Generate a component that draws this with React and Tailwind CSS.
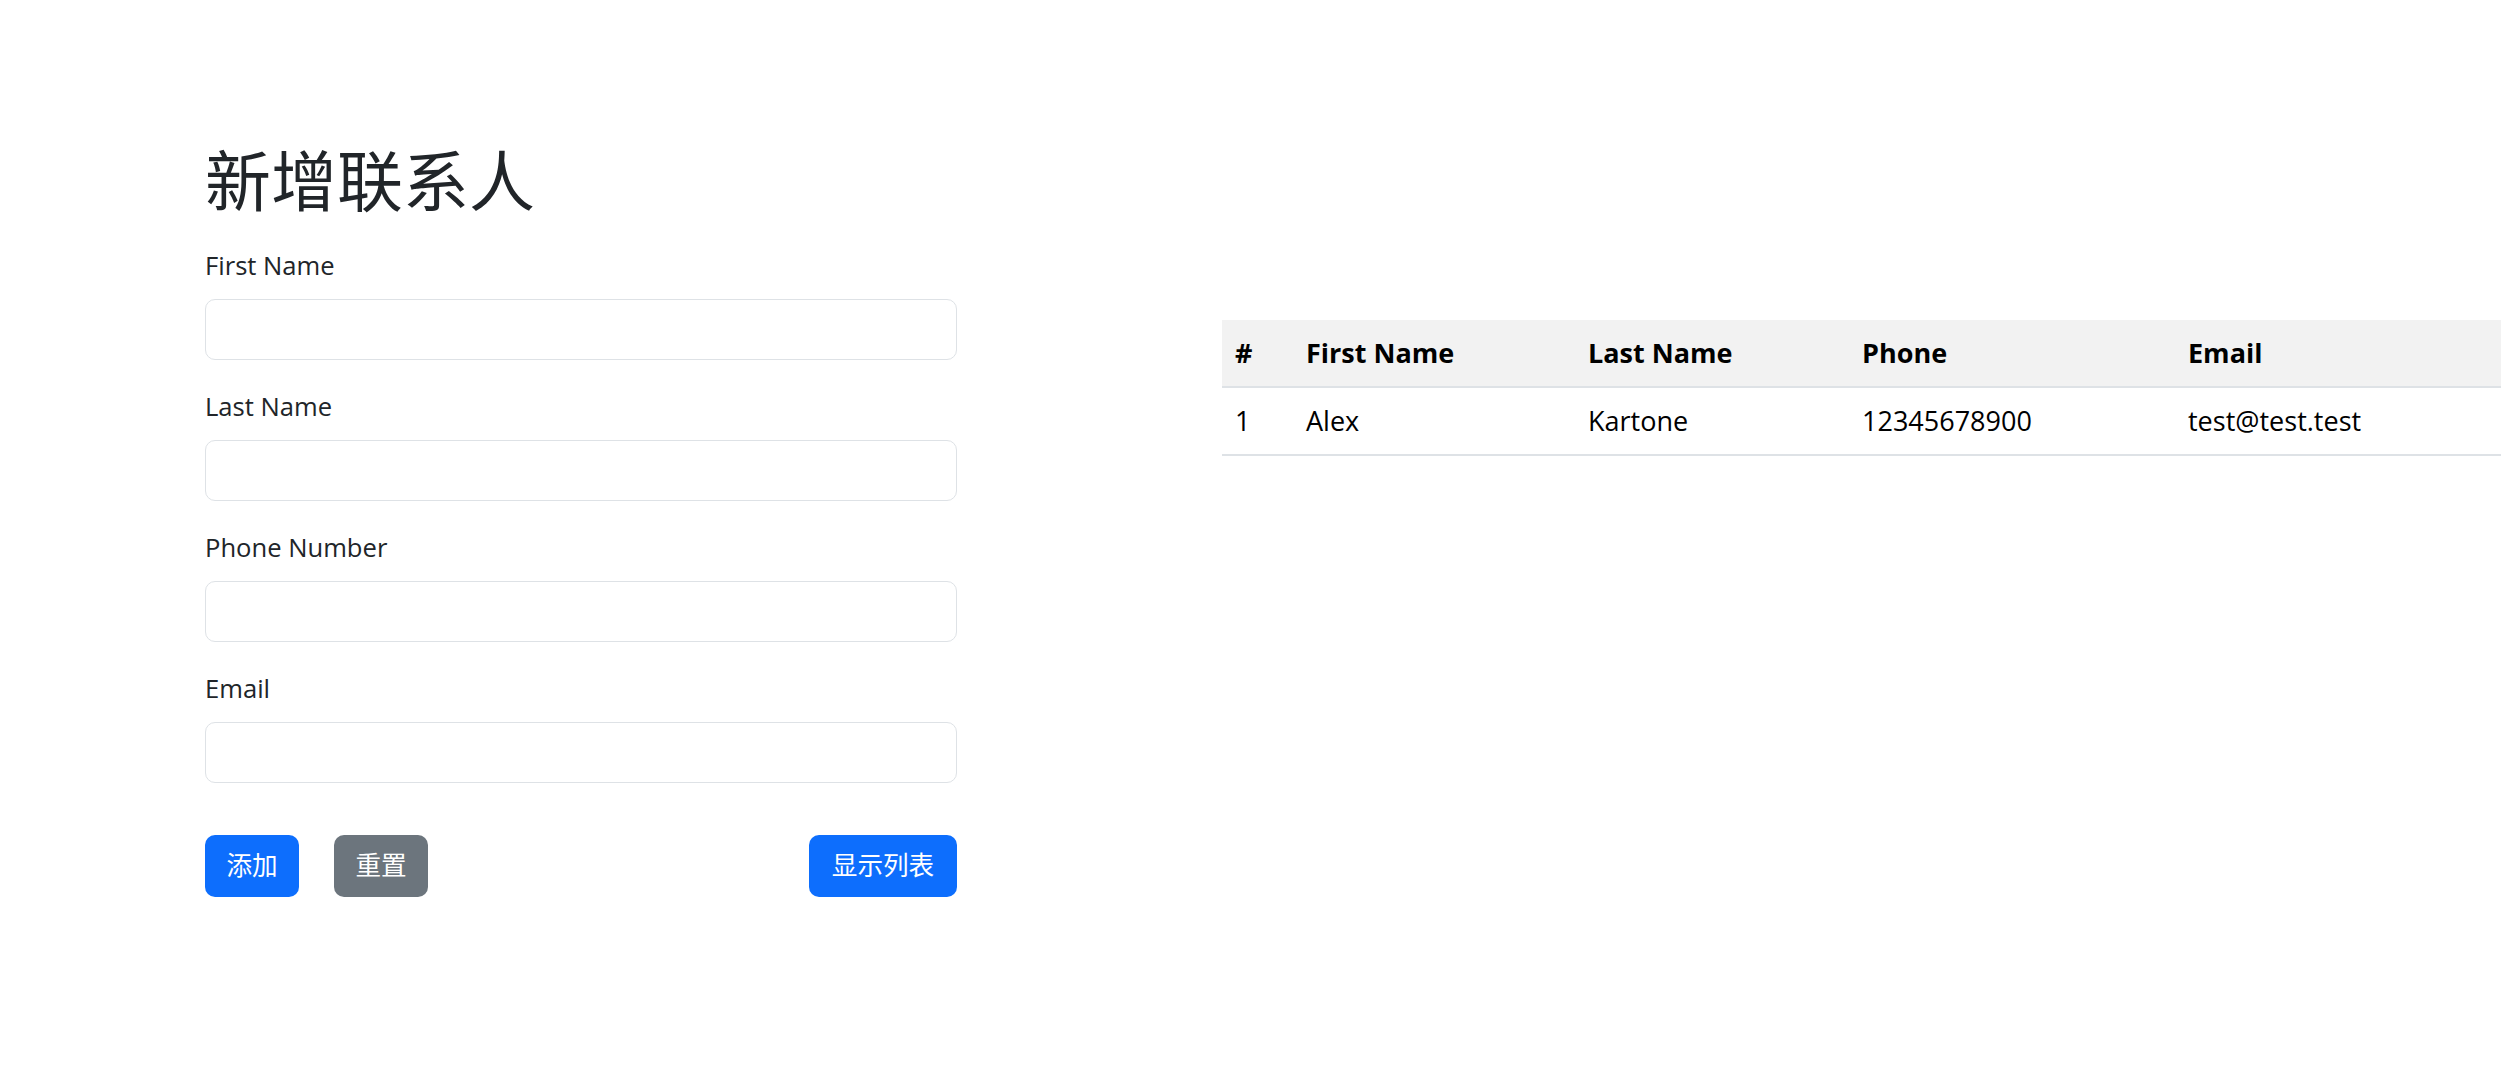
import React, { useState } from 'react';

const contacts = [
  { id: 1, firstName: 'Alex', lastName: 'Kartone', phone: '12345678900', email: 'test@test.test' }
];

const fields = [
  { key: 'firstName', label: 'First Name' },
  { key: 'lastName', label: 'Last Name' },
  { key: 'phone', label: 'Phone Number' },
  { key: 'email', label: 'Email' }
];

const font = { fontFamily: '"Open Sans", "Noto Sans CJK SC", sans-serif' };

const App = () => {
  const [form, setForm] = useState({ firstName: '', lastName: '', phone: '', email: '' });

  const handleChange = (key, value) => setForm({ ...form, [key]: value });
  const handleReset = () => setForm({ firstName: '', lastName: '', phone: '', email: '' });

  return (
    <div className="w-full min-h-screen overflow-hidden bg-white flex items-start text-[#212529]" style={font}>
      {/* Formulario */}
      <div className="ml-[205px] w-[752px] shrink-0 pt-[141px]">
        <h1 className="text-[66px] leading-[78px] font-normal mb-[28px]">新增联系人</h1>
        <div className="flex flex-col gap-[28px]">
          {fields.map(f => (
            <div key={f.key}>
              <label className="block text-[25.6px] leading-[38.4px] mb-[13.6px]">{f.label}</label>
              <input
                value={form[f.key]}
                onChange={e => handleChange(f.key, e.target.value)}
                className="block w-full h-[61px] rounded-[10px] border-[1.6px] border-[#dee2e6] px-[19px] text-[25.6px] outline-none"
              />
            </div>
          ))}
        </div>
        <div className="flex items-center mt-[52px]">
          <button className="h-[62px] w-[94px] rounded-[10px] bg-[#0d6efd] text-white text-[25.6px] leading-[38.4px]">添加</button>
          <button
            onClick={handleReset}
            className="h-[62px] w-[94px] ml-[35px] rounded-[10px] bg-[#6c757d] text-white text-[25.6px] leading-[38.4px]"
          >
            重置
          </button>
          <button className="h-[62px] w-[148px] ml-auto rounded-[10px] bg-[#0d6efd] text-white text-[25.6px] leading-[38.4px]">显示列表</button>
        </div>
      </div>

      {/* Tabla */}
      <div className="ml-[265px] mt-[320px] shrink-0">
        <table className="table-fixed w-[1400px] text-black text-[27px] leading-[40.5px] border-collapse">
          <colgroup>
            <col className="w-[71px]" />
            <col className="w-[282px]" />
            <col className="w-[274px]" />
            <col className="w-[326px]" />
            <col />
          </colgroup>
          <thead>
            <tr className="bg-[#f2f2f2] border-b-2 border-[#dee2e6]">
              <th className="text-left font-bold px-[13px] py-[12.8px]">#</th>
              <th className="text-left font-bold px-[13px] py-[12.8px]">First Name</th>
              <th className="text-left font-bold px-[13px] py-[12.8px]">Last Name</th>
              <th className="text-left font-bold px-[13px] py-[12.8px]">Phone</th>
              <th className="text-left font-bold px-[13px] py-[12.8px]">Email</th>
            </tr>
          </thead>
          <tbody>
            {contacts.map(c => (
              <tr key={c.id} className="border-b-2 border-[#dee2e6]">
                <td className="px-[13px] py-[12.8px]">{c.id}</td>
                <td className="px-[13px] py-[12.8px]">{c.firstName}</td>
                <td className="px-[13px] py-[12.8px]">{c.lastName}</td>
                <td className="px-[13px] py-[12.8px]">{c.phone}</td>
                <td className="px-[13px] py-[12.8px]">{c.email}</td>
              </tr>
            ))}
          </tbody>
        </table>
      </div>
    </div>
  );
};

export default App;
